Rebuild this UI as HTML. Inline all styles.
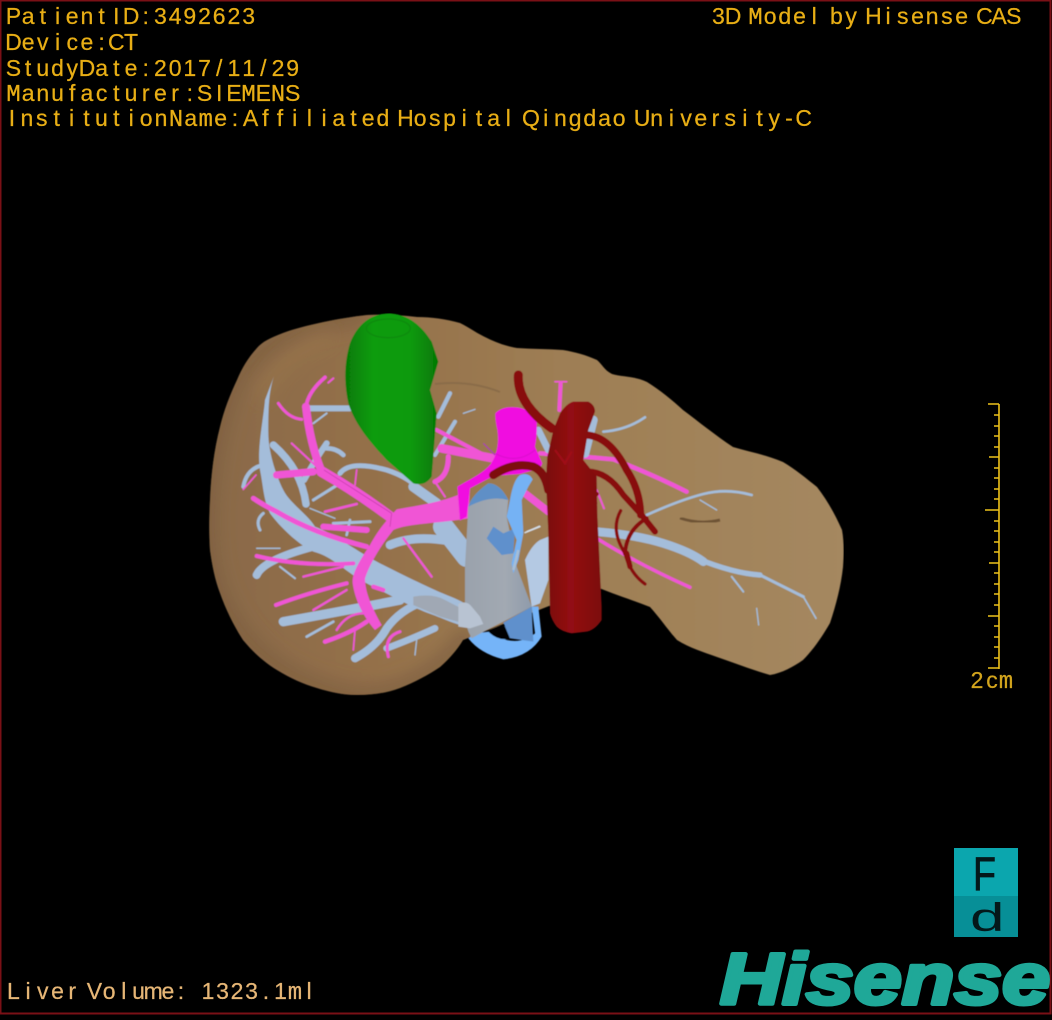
<!DOCTYPE html>
<html><head><meta charset="utf-8"><title>3D Model</title>
<style>html,body{margin:0;padding:0;background:#000;width:1052px;height:1020px;overflow:hidden}svg{display:block}
.t{font-family:"Liberation Sans",sans-serif;font-size:23px;fill:#e8ae14;stroke:#e8ae14;stroke-width:.25;text-anchor:middle}
.m{font-family:"Liberation Mono",monospace;font-size:24px}
.b{fill:none;stroke:#a4bdda;stroke-linecap:round;stroke-linejoin:round}
.p{fill:none;stroke:#f055d5;stroke-linecap:round;stroke-linejoin:round}
.r{fill:none;stroke:#880a10;stroke-linecap:round;stroke-linejoin:round}
</style></head><body>
<svg xmlns="http://www.w3.org/2000/svg" width="1052" height="1020" viewBox="0 0 1052 1020">
<defs>
<linearGradient id="lg" x1="0" x2="1" y1="0" y2="0"><stop offset="0" stop-color="#8a6a48"/><stop offset=".25" stop-color="#94704a"/><stop offset=".55" stop-color="#9e7e54"/><stop offset="1" stop-color="#a58860"/></linearGradient>
<linearGradient id="gg" x1="0" x2="1" y1="0" y2="0"><stop offset="0" stop-color="#067a06"/><stop offset=".3" stop-color="#0a9c0a"/><stop offset=".7" stop-color="#0a9a0a"/><stop offset="1" stop-color="#067806"/></linearGradient>
<linearGradient id="ag" x1="0" x2="1" y1="0" y2="0"><stop offset="0" stop-color="#7a0810"/><stop offset=".45" stop-color="#930a12"/><stop offset="1" stop-color="#7c0810"/></linearGradient>
<linearGradient id="cg" x1="0" x2="1" y1="0" y2="0"><stop offset="0" stop-color="#9aa2ac"/><stop offset=".6" stop-color="#a2a9b2"/><stop offset="1" stop-color="#8f9bab"/></linearGradient>
<filter id="bl" x="-20%" y="-20%" width="140%" height="140%"><feGaussianBlur stdDeviation="9"/></filter>
<filter id="s1"><feGaussianBlur stdDeviation=".35"/></filter>
<filter id="s2" x="0" y="0" width="100%" height="100%"><feGaussianBlur stdDeviation=".6"/></filter>
<clipPath id="lc"><path id="lp" d="M367 315C340 318 305 325 283 333C270 338 262 342 257 348C248 358 242 368 237 380C230 395 224 410 220 427C214 450 211 475 210 500C209 520 209 535 210 550C212 565 215 580 220 593C226 610 234 626 243 640C253 652 264 662 277 670C290 678 303 684 317 688C330 692 343 695 357 695C372 695 387 693 400 688C415 682 428 675 440 667C449 659 457 650 463 640L597 587C615 595 633 600 650 607C660 618 668 630 677 640C690 648 703 652 717 657C735 663 752 670 770 675C782 673 793 667 803 660C813 650 822 637 830 623C836 605 841 586 843 567C844 553 844 541 842 530C835 514 827 500 817 487C807 479 795 469 783 462C767 455 750 452 733 447C715 435 699 422 683 410C672 400 660 390 647 382C635 376 622 377 612 374C604 370 602 364 597 360C586 355 575 352 563 350C548 349 532 349 517 348C506 346 497 343 487 338C478 334 470 328 460 323C446 319 431 317 417 317C400 315 384 314 367 315Z"/></clipPath>
</defs>
<rect width="1052" height="1020" fill="#000"/>
<rect x="0.5" y="0.5" width="1050" height="1013" fill="none" stroke="#7a1016" stroke-width="2"/>

<g filter="url(#s2)">
<use href="#lp" fill="url(#lg)"/>
<g clip-path="url(#lc)">
<path d="M367 315C320 320 260 340 237 380C215 430 205 500 210 550C215 610 260 680 357 695C410 697 450 660 470 630" fill="none" stroke="#7e5f40" stroke-width="14" filter="url(#bl)"/>
<path d="M330 335C300 345 270 370 262 400" fill="none" stroke="#a07a50" stroke-width="6" filter="url(#bl)"/>
<path d="M680 518Q700 525 720 520" fill="none" stroke="#6e5236" stroke-width="3" filter="url(#s1)"/>
<path d="M435 384Q470 380 500 392" fill="none" stroke="#8a6c48" stroke-width="2" filter="url(#s1)"/>
</g>

<!-- left group -->
<g transform="translate(200 300) scale(.33333)">
 <g class="b">
  <path d="M250 965Q420 935 600 900" stroke-width="28"/>
  <path d="M320 1010L400 965" stroke-width="8"/>
  <path d="M465 1075Q530 1040 560 985Q600 930 670 905" stroke-width="24"/>
  <path d="M560 1045Q640 1015 705 985" stroke-width="20"/>
  <path d="M170 825Q190 780 340 740" stroke-width="24"/>
  <path d="M570 735Q640 705 740 722" stroke-width="26"/>
  <path d="M730 680L800 770" stroke-width="62"/>
  <path d="M640 560L710 610" stroke-width="30"/>
  <path d="M420 520Q450 480 560 510Q620 530 650 560" stroke-width="15"/>
  <path d="M340 600L420 550" stroke-width="9"/>
  <path d="M220 435Q305 510 318 612" stroke-width="22"/>
  <path d="M312 540Q345 480 380 430" stroke-width="18"/>
  <path d="M380 445Q410 445 430 465" stroke-width="14"/>
  <path d="M330 325L450 325" stroke-width="18"/>
  <path d="M340 370L380 340" stroke-width="6"/>
  <path d="M130 560Q140 505 190 495" stroke-width="12"/>
  <path d="M705 465L765 365" stroke-width="12"/>
  <path d="M715 350L750 280" stroke-width="13"/>
  <path d="M400 670L510 665" stroke-width="9"/>
  <path d="M440 705L450 660" stroke-width="8"/>
  <path d="M330 625L405 655" stroke-width="4"/>
  <path d="M790 340L825 328" stroke-width="4"/>
  <path d="M170 745L240 745" stroke-width="4"/>
  <path d="M180 690Q165 660 190 640" stroke-width="9"/>
  <path d="M650 1020L645 1065" stroke-width="4"/>
  <path d="M240 800L285 835" stroke-width="6"/>
 </g>
 <path d="M222 228C205 280 205 330 205 400C205 450 225 520 250 570C270 610 320 640 345 680C400 700 480 760 540 790C600 820 680 860 740 885C780 900 820 920 832 950L825 980C790 985 740 960 700 945C640 925 560 880 500 850C440 820 400 770 340 755C290 730 240 680 210 640C190 600 190 560 180 510C170 450 190 360 195 300Z" fill="#a4bdda"/>
 <path d="M640 890Q700 880 735 900L832 950L825 980L720 950L640 915Z" fill="#a0a8b4"/>
 <g class="p">
  <path d="M500 740Q340 700 230 635Q190 615 160 595" stroke-width="15"/>
  <path d="M460 790Q300 800 170 768" stroke-width="12"/>
  <path d="M440 850Q320 880 228 915" stroke-width="12"/>
  <path d="M440 870L340 930" stroke-width="7"/>
  <path d="M310 830L430 800" stroke-width="7"/>
  <path d="M610 715L695 830" stroke-width="7"/>
  <path d="M370 680L500 690" stroke-width="18"/>
  <path d="M375 635L470 612" stroke-width="8"/>
  <path d="M230 525L340 515" stroke-width="22"/>
  <path d="M275 430L350 500" stroke-width="6"/>
  <path d="M235 310Q265 355 305 358" stroke-width="9"/>
  <path d="M375 1025Q450 1000 500 965" stroke-width="13"/>
  <path d="M410 990Q440 940 490 940" stroke-width="7"/>
  <path d="M565 1070Q550 1010 600 995" stroke-width="9"/>
  <path d="M460 1050L465 990" stroke-width="5"/>
  <path d="M130 568L168 525" stroke-width="5"/>
  <path d="M520 860L550 870" stroke-width="13"/>
  <path d="M470 510L465 555" stroke-width="5"/>
  <path d="M385 248L400 235" stroke-width="6"/>
  <path d="M710 390L880 480" stroke-width="12"/>
  <path d="M725 445L880 475" stroke-width="26"/>
  <path d="M745 470Q745 530 705 545" stroke-width="15"/>
  <path d="M705 545L735 590" stroke-width="6"/>
  <!-- upper portal branch -->
  <path d="M570 650Q470 575 365 515" stroke-width="32"/>
  <path d="M365 515Q330 430 318 320" stroke-width="24"/>
  <path d="M318 320Q325 275 375 232" stroke-width="11"/>
 </g>
 <path d="M810 565C760 600 680 612 590 628C570 650 540 680 510 735C480 780 455 820 458 850C465 900 490 950 525 990L545 975C520 930 495 880 495 835C510 790 540 740 580 690C620 670 720 670 805 655Z" fill="#f055d5"/>
 <path d="M372 510L575 640M575 640L570 680" fill="none" stroke="#c03aa8" stroke-width="2"/>
 <path d="M570 40C640 45 675 95 695 125L715 185L690 270L710 340L695 530Q675 560 640 550L560 480C500 415 465 370 445 310C430 240 435 180 450 130C475 65 520 40 570 40Z" fill="url(#gg)"/>
 <ellipse cx="565" cy="85" rx="66" ry="28" fill="none" stroke="#088a08" stroke-width="4"/>
</g>

<!-- right group -->
<g transform="translate(450 340) scale(.33333)">
 <g class="p">
  <path d="M270 340Q400 350 490 358Q600 400 710 455" stroke-width="13"/>
  <path d="M328 210L332 130" stroke-width="12"/>
  <path d="M315 125L350 125" stroke-width="5"/>
  <path d="M440 595Q560 670 720 742" stroke-width="10"/>
  <path d="M225 460L295 515" stroke-width="22"/>
  <path d="M440 450L462 505" stroke-width="6"/>
 </g>
 <g class="b">
  <path d="M440 575Q560 585 640 610T760 665" stroke-width="26"/>
  <path d="M740 655Q850 700 930 705" stroke-width="16"/>
  <path d="M930 705L1060 770" stroke-width="9"/>
  <path d="M1060 770L1098 835" stroke-width="5"/>
  <path d="M590 525Q690 480 760 462T905 465" stroke-width="8"/>
  <path d="M750 480L800 510" stroke-width="4"/>
  <path d="M845 710L880 755" stroke-width="6"/>
  <path d="M920 805L926 855" stroke-width="4"/>
  <path d="M460 275Q530 270 585 232" stroke-width="8"/>
  <path d="M265 270L295 330" stroke-width="20"/>
  <path d="M405 340L430 240" stroke-width="26"/>
  <path d="M225 578L270 560" stroke-width="4" stroke="#d5e0ea"/>
 </g>
</g>

<!-- centre group -->
<g transform="translate(460 400) scale(.33333)">
 <path d="M195 480Q215 435 240 420L265 410L265 540L240 610L215 620Z" fill="#b4c9e3"/>
 <path d="M200 395Q225 385 240 378" fill="none" stroke="#d5e0ea" stroke-width="4"/>
 <path d="M106 40Q125 18 170 22Q205 25 230 60Q232 105 225 140L247 190L240 205L180 222L100 228L30 265L20 350L0 362L-8 260C25 240 60 225 85 200C110 175 118 130 112 90Q105 60 106 40Z" fill="#f010e0"/>
 <path d="M105 160Q170 195 225 150" fill="none" stroke="#d90ccc" stroke-width="3"/>
 <path d="M70 130L105 165" fill="none" stroke="#b020c0" stroke-width="3"/>
 <path d="M25 715Q60 760 130 778Q210 770 245 710L235 620L215 620L225 700Q190 730 140 720L85 695L45 700Z" fill="#74b4f8"/>
 <path d="M85 695Q110 675 140 680L150 715Q115 725 85 695Z" fill="#000"/>
 <path d="M25 320Q35 285 85 250Q120 250 145 300L140 350L170 500L215 620L130 665L80 690L35 715Q15 680 15 640L15 500Z" fill="url(#cg)"/>
 <path d="M25 320Q35 285 85 250Q120 250 145 300Q90 285 25 320Z" fill="#5e8fc6"/>
 <path d="M80 415L100 380L130 400L165 385L160 460L125 465Z" fill="#5e90cc"/>
 <path d="M130 668L215 620L220 725L150 715Z" fill="#5e90cc"/>
 <path d="M-5 612Q20 600 35 620L60 650L70 672L30 685L-5 680Z" fill="#b8c3d2"/>
 <path d="M150 300Q160 240 180 225Q205 215 218 238L205 260L185 300L190 400L175 480L160 520L155 490L170 420L140 350Z" fill="#74b2f4"/>
 <path d="M160 510L175 450" fill="none" stroke="#a6bdd6" stroke-width="8"/>
</g>

<!-- arteries -->
<g transform="translate(450 340) scale(.33333)">
 <g class="r">
  <path d="M205 105Q200 190 305 265" stroke-width="27"/>
  <path d="M130 405Q190 365 250 380Q285 395 295 450" stroke-width="25" stroke="#7e0a0e"/>
  <path d="M410 285Q480 290 530 390Q570 450 572 525" stroke-width="22"/>
  <path d="M405 395Q470 390 520 465L575 525L615 575" stroke-width="18"/>
  <path d="M395 450L440 462" stroke-width="13"/>
  <path d="M430 430L436 490" stroke-width="11"/>
  <path d="M512 512Q480 570 525 640Q540 700 585 732" stroke-width="10"/>
  <path d="M590 535Q530 570 525 640" stroke-width="12"/>
  <path d="M540 680L530 640" stroke-width="16"/>
 </g>
 <path d="M330 220Q350 190 370 185L415 185Q435 195 435 215L415 270L400 360L440 410L442 520L455 800L455 840Q435 870 410 875L365 880Q335 875 320 860Q305 840 300 820L295 580L288 420L292 350L310 270Z" fill="url(#ag)"/>
 <path d="M315 330L345 370L365 335" fill="none" stroke="#a01018" stroke-width="6"/>
</g>
</g>

<!-- text -->
<g filter="url(#s1)">
<text class="t" x="13.4 28.1 42.8 57.5 72.2 86.9 101.6 116.3 131 145.7 160.4 175.1 189.8 204.5 219.2 233.9 248.6" y="24">PatientID:3492623</text>
<text class="t" x="13.4 28.1 42.8 57.5 72.2 86.9 101.6 116.3 131" y="50">Device:CT</text>
<text class="t" x="13.4 28.1 42.8 57.5 72.2 86.9 101.6 116.3 131 145.7 160.4 175.1 189.8 204.5 219.2 233.9 248.6 263.3 278 292.7" y="76">StudyDate:2017/11/29</text>
<text class="t" x="13.4 28.1 42.8 57.5 72.2 86.9 101.6 116.3 131 145.7 160.4 175.1 189.8 204.5 219.2 233.9 248.6 263.3 278 292.7" y="101"><tspan class="m">M</tspan>anufacturer:SIE<tspan class="m">M</tspan>E<tspan class="m">N</tspan>S</text>
<text class="t" x="12 26.9 41.8 56.7 71.6 86.5 101.4 116.3 131.2 146.1 161 175.9 190.8 205.7 220.6 235 250.6 265.3 280 294.7 309.4 324.1 338.8 353.5 368.2 382.9 394 405.4 420.1 434.8 449.5 464.2 478.9 493.6 508.3 519.5 531 545.7 560.4 575.1 589.8 604.5 619.2 630.5 642 656.7 671.4 686.1 700.8 715.5 730.2 744.9 759.6 774.3 789 803.7" y="126">Institution<tspan class="m">N</tspan>a<tspan class="m">m</tspan>e:Affiliated Hospital Qingdao University-C</text>
<text class="t" x="718.4 733.1 744 755.4 770.1 784.8 799.5 814.2 825 836.4 851.1 862 873.4 888.1 902.8 917.5 932.2 946.9 961.6 973 984.4 999.1 1013.8" y="24">3D <tspan class="m">M</tspan>odel by Hisense CAS</text>
<text class="t" x="13.4 28.1 42.8 57.5 72.2 83 94.4 109.1 123.8 138.5 153.2 167.9 181 193.4 208 222.5 237 251.5 266 280.5 295 309" y="999" style="fill:#e6b676;stroke:#e6b676">Liver Volume: 1323.1<tspan class="m">m</tspan>l</text>
<text class="t" x="977 992 1006" y="688" style="fill:#d2a41e;stroke:#d2a41e">2c<tspan class="m">m</tspan></text>
</g>

<!-- scale -->
<g stroke="#eec21a" stroke-width="1.6" fill="none">
<path d="M999 404V669"/>
<path d="M988 404H999M994 415H999M994 426H999M994 436H999M994 447H999M989 457H999M994 468H999M994 478H999M994 489H999M994 499H999M985 510H999M994 521H999M994 531H999M994 542H999M994 552H999M989 563H999M994 573H999M994 584H999M994 594H999M994 605H999M988 616H999M994 626H999M994 637H999M994 647H999M994 658H999M988 668H999"/>
</g>

<!-- Fd box -->
<rect x="954" y="848" width="64" height="48" fill="#0ba6ae"/>
<rect x="954" y="896" width="64" height="41" fill="#078f97"/>
<text transform="translate(973 890) scale(.8 1)" x="0" y="0" font-family="Liberation Sans,sans-serif" font-size="47" fill="#04181a" stroke="#04181a" stroke-width=".8">F</text>
<text transform="translate(970 931) scale(1.55 1)" x="0" y="0" font-family="Liberation Sans,sans-serif" font-size="40" fill="#04181a">d</text>

<!-- logo -->
<text x="720" y="1004" font-family="Liberation Sans,sans-serif" font-weight="700" font-style="italic" font-size="72" fill="#1fa898" stroke="#1fa898" stroke-width="4" stroke-linejoin="round" textLength="330" lengthAdjust="spacingAndGlyphs">Hisense</text>
</svg>
</body></html>
